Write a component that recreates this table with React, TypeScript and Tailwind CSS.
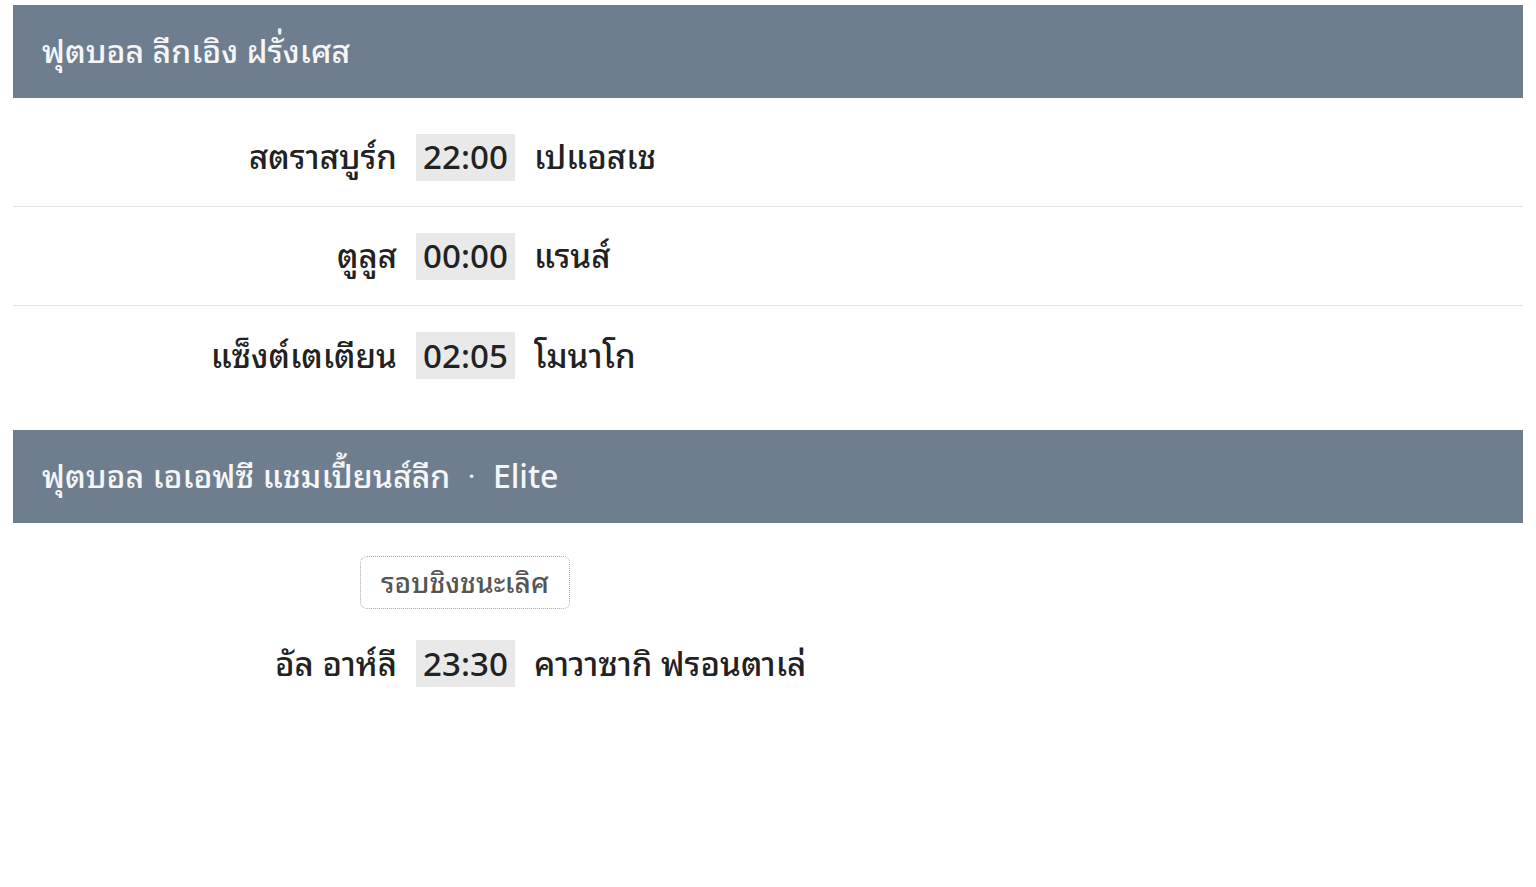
import React from 'react';

type Match = { home: string; time: string; away: string };

const FONT = {
  fontFamily: '"Noto Sans Thai Looped", Tahoma, Loma, "Noto Sans", "Noto Sans Thai", sans-serif',
};

const Header: React.FC<{ title: string; extra?: string }> = ({ title, extra }) => (
  <div className="h-[93px] bg-[#6f7e8e] flex items-center pl-[29px] pb-[5px] text-[32px] font-medium text-[#f4f6f8]">
    <span>{title}</span>
    {extra && (
      <>
        <span className="mx-[18px] text-[24px]">·</span>
        <span>{extra}</span>
      </>
    )}
  </div>
);

const Row: React.FC<{ m: Match; last?: boolean }> = ({ m, last }) => (
  <div className={`h-[99px] flex items-center pb-[4px] text-[33px] font-medium text-[#222] ${last ? '' : 'border-b border-[#e2e2e2]'}`}>
    <div className="w-[384px] text-right whitespace-nowrap">{m.home}</div>
    <div className="ml-[19px] mt-[4px] w-[99px] h-[47px] pb-[4px] bg-[#e9e9e9] flex items-center justify-center">{m.time}</div>
    <div className="ml-[19px] whitespace-nowrap">{m.away}</div>
  </div>
);

const LIGUE1: Match[] = [
  { home: 'สตราสบูร์ก', time: '22:00', away: 'เปแอสเช' },
  { home: 'ตูลูส', time: '00:00', away: 'แรนส์' },
  { home: 'แซ็งต์เตเตียน', time: '02:05', away: 'โมนาโก' },
];

export default function App() {
  return (
    <div className="min-h-screen bg-white px-[13px] pt-[5px]" style={FONT}>
      <Header title="ฟุตบอล ลีกเอิง ฝรั่งเศส" />
      <div className="mt-[10px]">
        {LIGUE1.map((m, i) => (
          <Row key={m.time} m={m} last={i === LIGUE1.length - 1} />
        ))}
      </div>

      <div className="mt-[25px]">
        <Header title="ฟุตบอล เอเอฟซี แชมเปี้ยนส์ลีก" extra="Elite" />
      </div>
      <div className="mt-[33px] flex">
        <div className="ml-[347px] w-[210px] h-[53px] pb-[3px] border border-dotted border-[#a8a8a8] rounded-[7px] flex items-center justify-center text-[28px] font-medium text-[#555]">
          รอบชิงชนะเลิศ
        </div>
      </div>
      <div className="mt-[5px]">
        <Row m={{ home: 'อัล อาห์ลี', time: '23:30', away: 'คาวาซากิ ฟรอนตาเล่' }} last />
      </div>
    </div>
  );
}
